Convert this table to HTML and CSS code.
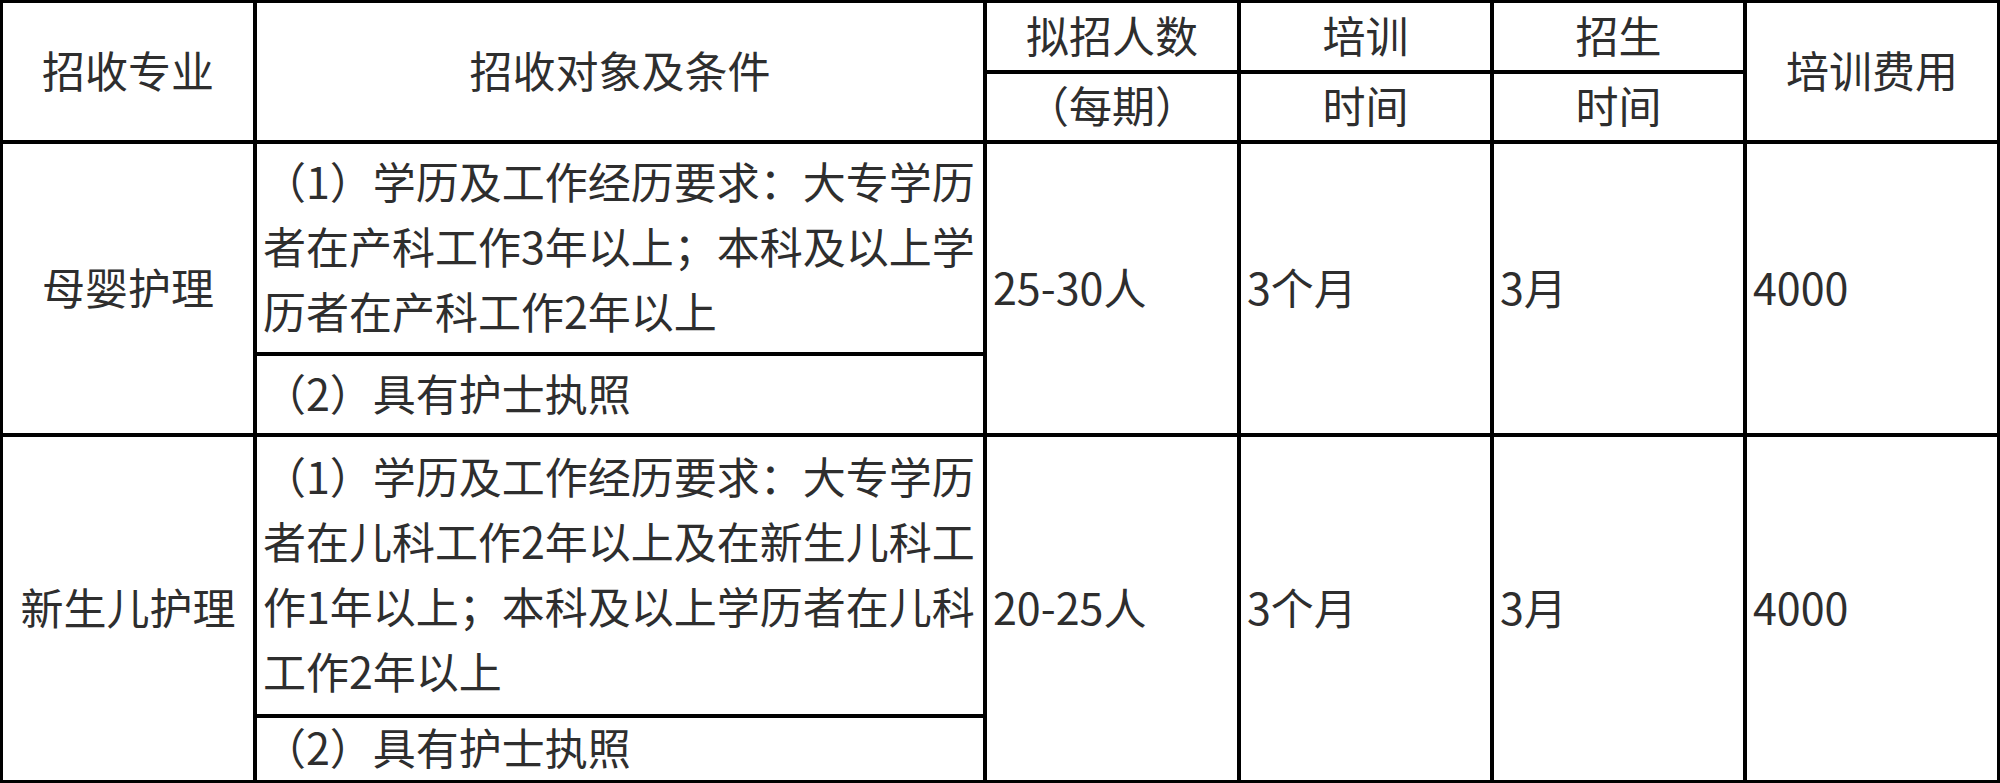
FILE: index.html
```html
<!DOCTYPE html>
<html lang="zh-CN">
<head>
<meta charset="utf-8">
<title>招收专业</title>
<link rel="stylesheet" href="styles.css">
</head>
<body>
<div class="sheet">
  <div class="cell head span2">招收专业</div>
  <div class="cell head span2">招收对象及条件</div>
  <div class="cell head">拟招人数</div>
  <div class="cell head">培训</div>
  <div class="cell head">招生</div>
  <div class="cell head span2">培训费用</div>
  <div class="cell head">（每期）</div>
  <div class="cell head">时间</div>
  <div class="cell head">时间</div>

  <div class="cell major span2">母婴护理</div>
  <div class="cell body multi">（1）学历及工作经历要求：大专学历者在产科工作3年以上；本科及以上学历者在产科工作2年以上</div>
  <div class="cell body span2">25-30人</div>
  <div class="cell body span2">3个月</div>
  <div class="cell body span2">3月</div>
  <div class="cell body span2">4000</div>
  <div class="cell body">（2）具有护士执照</div>

  <div class="cell major span2">新生儿护理</div>
  <div class="cell body multi">（1）学历及工作经历要求：大专学历者在儿科工作2年以上及在新生儿科工作1年以上；本科及以上学历者在儿科工作2年以上</div>
  <div class="cell body span2">20-25人</div>
  <div class="cell body span2">3个月</div>
  <div class="cell body span2">3月</div>
  <div class="cell body span2">4000</div>
  <div class="cell body">（2）具有护士执照</div>
</div>
</body>
</html>
```

FILE: styles.css
```css
html, body {
  margin: 0;
  padding: 0;
  background: #ffffff;
}

body {
  font-family: "Noto Sans CJK SC", "Noto Sans", sans-serif;
  color: #2e2e2e;
}

.sheet {
  box-sizing: border-box;
  width: 2000px;
  height: 783px;
  display: grid;
  grid-template-columns: 250px 726px 250px 249px 249px 250px;
  grid-template-rows: 67px 66px 208px 77px 277px 62px;
  gap: 4px;
  padding: 3px;
  background: #000000;
}

.cell {
  background: #ffffff;
  display: flex;
  align-items: center;
  font-size: 43px;
  line-height: 50px;
  padding-bottom: 6px;
}

.multi {
  line-height: 65px;
}

.span2 {
  grid-row: span 2;
}

.head,
.major {
  justify-content: center;
  text-align: center;
}

.body {
  justify-content: flex-start;
  padding-left: 6px;
  padding-right: 6px;
}
```
